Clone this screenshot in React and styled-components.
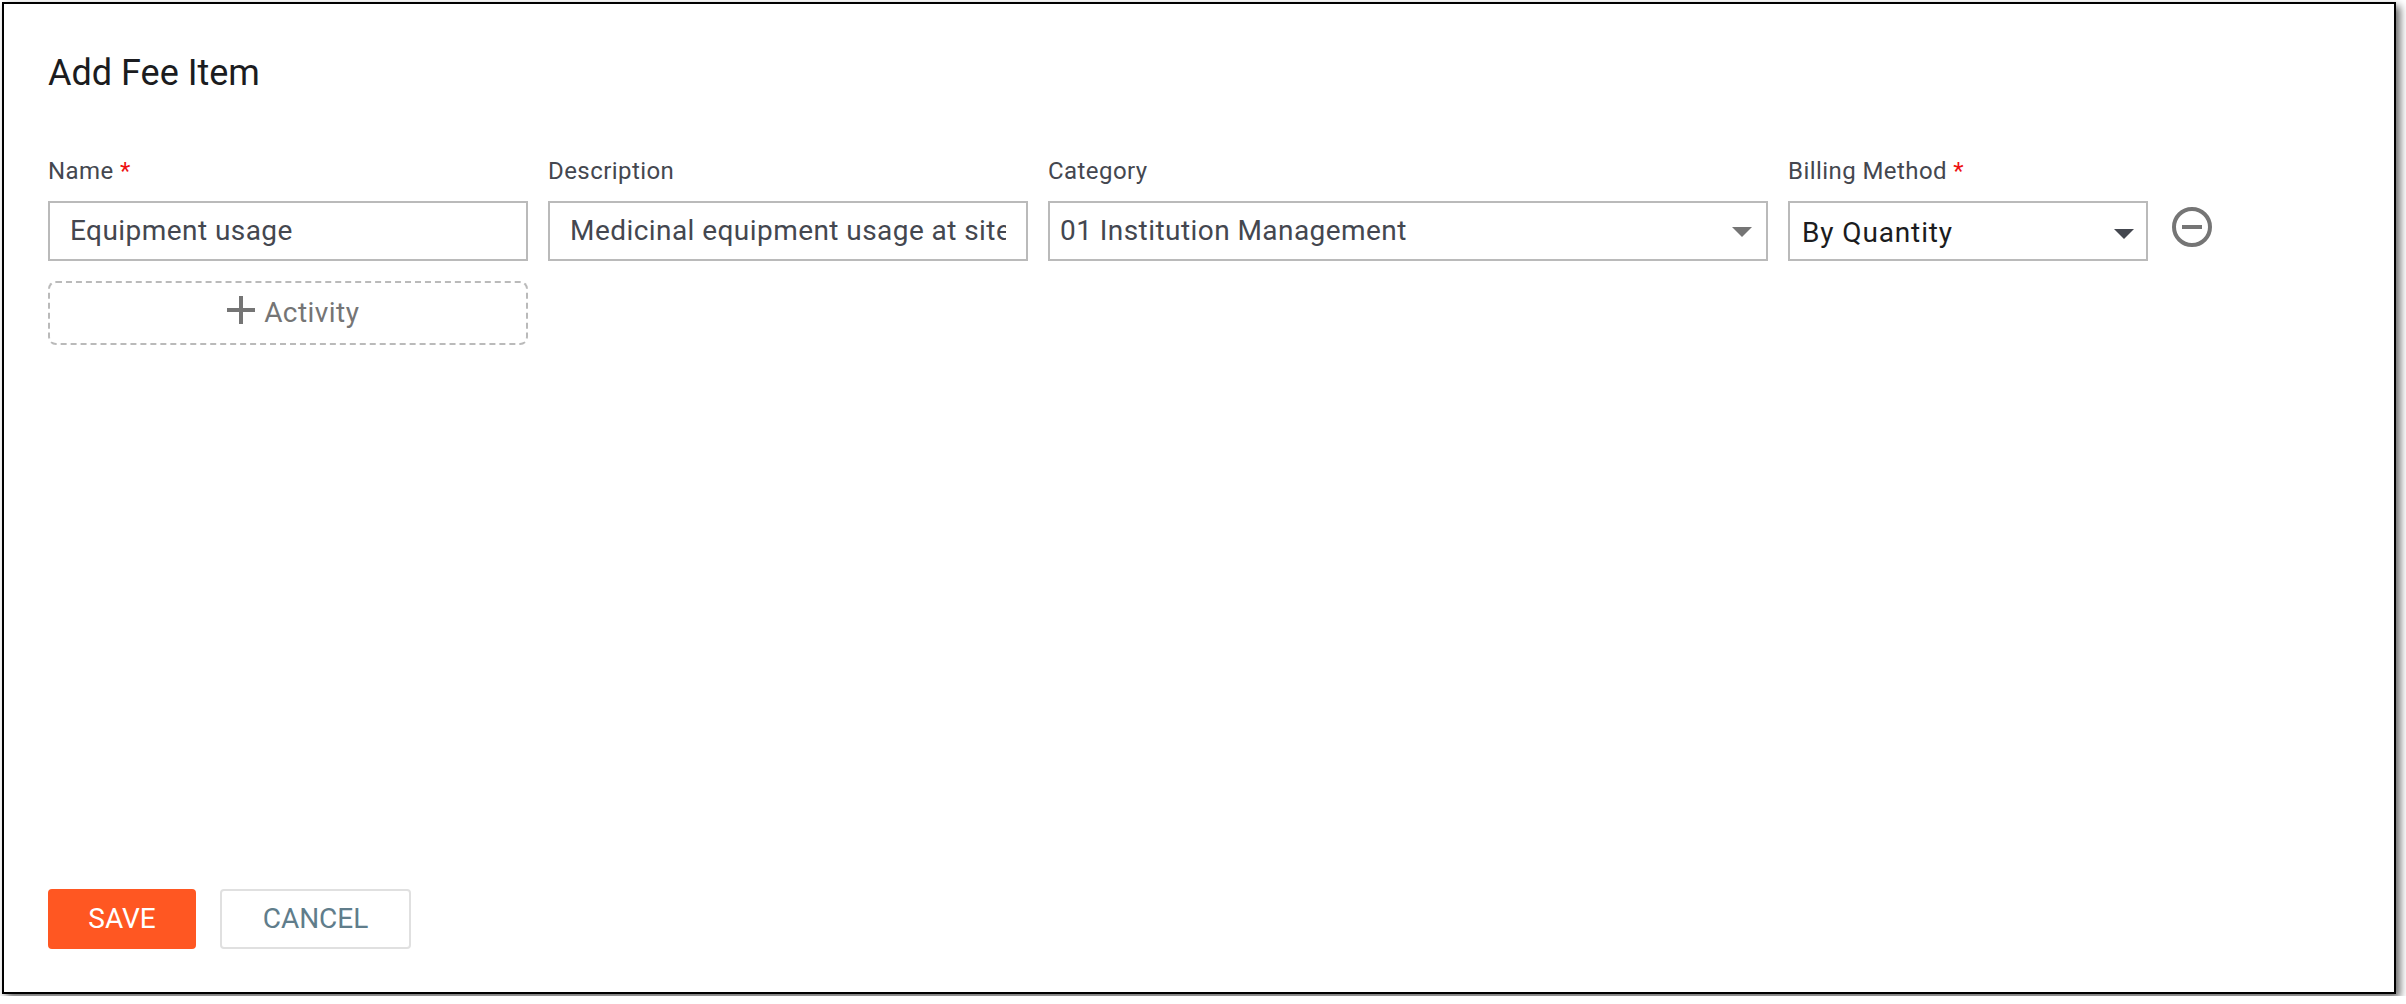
import React from 'react';
import styled, { createGlobalStyle } from 'styled-components';

const GlobalStyle = createGlobalStyle`
  *, *::before, *::after { box-sizing: border-box; }
  body { margin: 0; background: #fff; overflow: hidden; }
  body, input, button { font-family: Roboto, "Liberation Sans", sans-serif; }
`;

const Panel = styled.main`
  display: flex;
  flex-direction: column;
  width: 2394px;
  height: 992px;
  margin: 2px;
  padding: 45px 44px 43px;
  border: 2px solid #000;
  background: #fff;
  box-shadow: 4px 4px 8px rgba(0, 0, 0, 0.6);
`;

const Title = styled.h1`
  margin: 0;
  height: 48px;
  font-size: 36px;
  line-height: 48px;
  font-weight: 400;
  color: #1b1c20;
`;

const FieldRow = styled.section`
  display: grid;
  grid-template-columns: 480px 480px 720px 360px 40px;
  column-gap: 20px;
  margin-top: 56px;
`;

const Field = styled.div`
  display: flex;
  flex-direction: column;
`;

const Label = styled.label`
  height: 48px;
  font-size: 24px;
  line-height: 36px;
  letter-spacing: 0.43px;
  white-space: nowrap;
  color: #44474f;
`;

const Required = styled.span`
  color: #ee1111;
`;

const TextInput = styled.input`
  width: 100%;
  height: 60px;
  padding: 0 20px 2px;
  border: 2px solid #bababa;
  border-radius: 0;
  outline: none;
  font-size: 28px;
  letter-spacing: 0.44px;
  color: #44474f;
  background: #fff;
`;

const Select = styled.div`
  display: flex;
  align-items: center;
  justify-content: space-between;
  height: 60px;
  padding: ${(p) => (p.$dark ? '2px 12px 0 12px' : '0 14px 2px 10px')};
  border: 2px solid #bababa;
  font-size: 28px;
  letter-spacing: ${(p) => (p.$dark ? 0.87 : 0.44)}px;
  color: ${(p) => (p.$dark ? '#1b1c20' : '#44474f')};
`;

const Caret = styled.span`
  width: 0;
  height: 0;
  margin-top: 4px;
  border: 10px solid transparent;
  border-top-color: ${(p) => p.$color};
  border-bottom: 0;
`;

const RemoveButton = styled.button`
  align-self: start;
  width: 40px;
  height: 40px;
  margin: 54px 0 0 4px;
  padding: 0;
  border: 0;
  background: none;
  color: #757575;
  svg { display: block; }
`;

const AddActivity = styled.button`
  display: flex;
  align-items: center;
  justify-content: center;
  gap: 9.5px;
  width: 480px;
  height: 64px;
  margin-top: 20px;
  padding: 0 0 2px 10px;
  border: 2px dashed #bababa;
  border-radius: 8px;
  background: #fff;
  font-size: 28px;
  letter-spacing: 0.44px;
  color: #757575;
`;

const PlusIcon = styled.svg`
  display: block;
  margin-bottom: 4px;
`;

const Actions = styled.footer`
  display: flex;
  gap: 24px;
  margin-top: auto;
`;

const Button = styled.button`
  width: ${(p) => p.$width}px;
  height: 60px;
  padding: 0 0 2px;
  border: 2px solid ${(p) => (p.$primary ? '#ff5722' : '#e0e0e0')};
  border-radius: 4px;
  background: ${(p) => (p.$primary ? '#ff5722' : '#fff')};
  color: ${(p) => (p.$primary ? '#fff' : '#607d8b')};
  font-size: 28px;
`;

export default function App() {
  return (
    <>
      <GlobalStyle />
      <Panel>
        <Title>Add Fee Item</Title>
        <FieldRow>
          <Field>
            <Label>Name <Required>*</Required></Label>
            <TextInput defaultValue="Equipment usage" />
          </Field>
          <Field>
            <Label>Description</Label>
            <TextInput defaultValue="Medicinal equipment usage at site" />
          </Field>
          <Field>
            <Label>Category</Label>
            <Select>
              01 Institution Management
              <Caret $color="#757575" />
            </Select>
          </Field>
          <Field>
            <Label>Billing Method <Required>*</Required></Label>
            <Select $dark>
              By Quantity
              <Caret $color="#44474f" />
            </Select>
          </Field>
          <RemoveButton aria-label="Remove">
            <svg width="40" height="40" viewBox="0 0 40 40" fill="none" stroke="currentColor" strokeWidth="4">
              <circle cx="20" cy="20" r="18" />
              <path d="M10 20h20" />
            </svg>
          </RemoveButton>
        </FieldRow>
        <AddActivity>
          <PlusIcon width="28" height="28" viewBox="0 0 28 28" fill="none" stroke="currentColor" strokeWidth="4">
            <path d="M14 0v28M0 14h28" />
          </PlusIcon>
          Activity
        </AddActivity>
        <Actions>
          <Button $primary $width={148}>SAVE</Button>
          <Button $width={191}>CANCEL</Button>
        </Actions>
      </Panel>
    </>
  );
}
